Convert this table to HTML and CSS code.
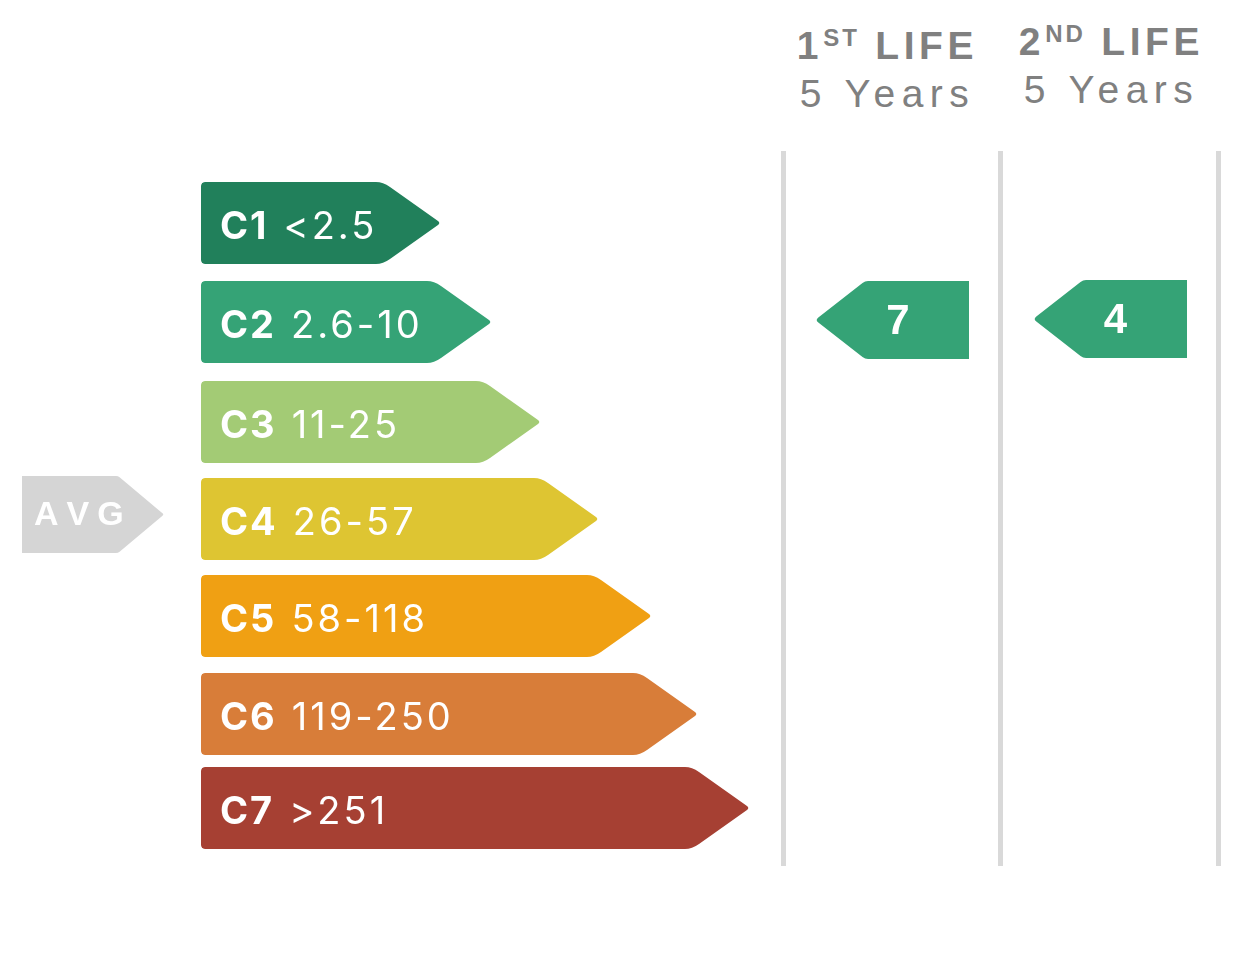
FILE: index.html
```html
<!DOCTYPE html>
<html lang="en">
<head>
<meta charset="utf-8">
<title>Category scale</title>
<link rel="stylesheet" href="styles.css">
</head>
<body>
<div class="chart">
  <div class="head head-1">
    <div class="head-title">1<sup class="ord">ST</sup> LIFE</div>
    <div class="head-sub">5 Years</div>
  </div>
  <div class="head head-2">
    <div class="head-title">2<sup class="ord">ND</sup> LIFE</div>
    <div class="head-sub">5 Years</div>
  </div>

  <div class="lane lane-1"></div>
  <div class="lane lane-2"></div>

  <div class="avg">AVG</div>

  <div class="bar c1"><b class="code">C1</b><span class="range">&lt;2.5</span></div>
  <div class="bar c2"><b class="code">C2</b><span class="range">2.6-10</span></div>
  <div class="bar c3"><b class="code">C3</b><span class="range">11-25</span></div>
  <div class="bar c4"><b class="code">C4</b><span class="range">26-57</span></div>
  <div class="bar c5"><b class="code">C5</b><span class="range">58-118</span></div>
  <div class="bar c6"><b class="code">C6</b><span class="range">119-250</span></div>
  <div class="bar c7"><b class="code">C7</b><span class="range">&gt;251</span></div>

  <div class="marker marker-1">7</div>
  <div class="marker marker-2">4</div>
</div>
</body>
</html>
```

FILE: styles.css
```css
html, body {
  margin: 0;
  padding: 0;
  background: #ffffff;
}

body {
  font-family: Inter, "Liberation Sans", Arial, sans-serif;
  color: #ffffff;
}

.chart {
  display: grid;
  grid-template-columns: 201px 580px 217px 223px;
  /* header, C1..C7 tracks (bar sits at the bottom of each), footer */
  grid-template-rows: 151px 113px 99px 100px 97px 97px 98px 94px 17px;
  width: 1221px;
}

/* ---------- column headers ---------- */
.head {
  grid-row: 1;
  align-self: start;
  padding-top: 22px;
  text-align: center;
  color: #808080;
  font-family: "Liberation Sans", Arial, sans-serif;
  font-size: 39px;
  line-height: 48px;
  white-space: nowrap;
}
.head-1 { grid-column: 3; padding-right: 4px; }
.head-2 { grid-column: 4; padding-top: 18px; padding-left: 4px; }

.head-title {
  font-weight: 700;
  letter-spacing: 4.6px;
}
.ord {
  font-size: 24px;
  line-height: 0;
  vertical-align: 13px;
  letter-spacing: 3px;
}
.head-sub {
  font-weight: 400;
  letter-spacing: 6.5px;
}

/* ---------- life lanes ---------- */
.lane {
  grid-row: 2 / 10;
  border-left: 5px solid #d9d9d9;
}
.lane-1 { grid-column: 3; }
.lane-2 { grid-column: 4; border-right: 5px solid #d9d9d9; }

/* ---------- bars ---------- */
.bar {
  grid-column: 2;
  align-self: end;
  justify-self: start;
  display: flex;
  align-items: center;
  gap: 15px;
  box-sizing: border-box;
  height: 82px;
  padding-left: 19px;
  padding-top: 4px;
  border-radius: 4px 0 0 4px;
  background: var(--c);
  font-size: 38px;
  line-height: 1;
  white-space: nowrap;
  -webkit-mask:
    linear-gradient(#000 0 0) left / calc(100% - 66px) 100% no-repeat,
    url("data:image/svg+xml;utf8,%3Csvg xmlns='http://www.w3.org/2000/svg' viewBox='0 0 68 82' width='68' height='82'%3E%3Cpath d='M0,0 H3 Q10,0 17,5 L65,39 Q67.6,41 65,43 L17,77 Q10,82 3,82 H0 Z'/%3E%3C/svg%3E") right / 68px 82px no-repeat;
  mask:
    linear-gradient(#000 0 0) left / calc(100% - 66px) 100% no-repeat,
    url("data:image/svg+xml;utf8,%3Csvg xmlns='http://www.w3.org/2000/svg' viewBox='0 0 68 82' width='68' height='82'%3E%3Cpath d='M0,0 H3 Q10,0 17,5 L65,39 Q67.6,41 65,43 L17,77 Q10,82 3,82 H0 Z'/%3E%3C/svg%3E") right / 68px 82px no-repeat;
}
.code {
  font-weight: 700;
  letter-spacing: 2px;
}
.range {
  font-weight: 400;
  letter-spacing: 3px;
}

.c1 { grid-row: 2; width: 240px; --c: #21805b; }
.c2 { grid-row: 3; width: 291px; --c: #35a376; }
.c3 { grid-row: 4; width: 340px; --c: #a3cb75; }
.c4 { grid-row: 5; width: 398px; --c: #dec532; }
.c5 { grid-row: 6; width: 451px; --c: #f0a013; }
.c6 { grid-row: 7; width: 497px; --c: #d87d39; }
.c7 { grid-row: 8; width: 549px; --c: #a64033; }

/* ---------- average tag ---------- */
.avg {
  grid-column: 1;
  grid-row: 5;
  align-self: end;
  justify-self: start;
  box-sizing: border-box;
  width: 142px;
  height: 77px;
  margin-bottom: 7px;
  margin-left: 22px;
  padding-left: 12px;
  padding-bottom: 4px;
  display: flex;
  align-items: center;
  background: #d5d5d5;
  font-family: "Liberation Sans", Arial, sans-serif;
  font-size: 34px;
  font-weight: 700;
  font-kerning: none;
  letter-spacing: 8px;
  line-height: 1;
  -webkit-mask:
    linear-gradient(#000 0 0) left / calc(100% - 55px) 100% no-repeat,
    url("data:image/svg+xml;utf8,%3Csvg xmlns='http://www.w3.org/2000/svg' viewBox='0 0 56 77' width='56' height='77'%3E%3Cpath d='M0,0 H8 Q10,0 11.6,1.3 L54.5,37.3 Q56,38.5 54.5,39.7 L11.6,75.7 Q10,77 8,77 H0 Z'/%3E%3C/svg%3E") right / 56px 77px no-repeat;
  mask:
    linear-gradient(#000 0 0) left / calc(100% - 55px) 100% no-repeat,
    url("data:image/svg+xml;utf8,%3Csvg xmlns='http://www.w3.org/2000/svg' viewBox='0 0 56 77' width='56' height='77'%3E%3Cpath d='M0,0 H8 Q10,0 11.6,1.3 L54.5,37.3 Q56,38.5 54.5,39.7 L11.6,75.7 Q10,77 8,77 H0 Z'/%3E%3C/svg%3E") right / 56px 77px no-repeat;
}

/* ---------- life markers ---------- */
.marker {
  grid-row: 3;
  align-self: end;
  justify-self: center;
  box-sizing: border-box;
  width: 154px;
  height: 78px;
  padding-left: 12px;
  display: flex;
  align-items: center;
  justify-content: center;
  background: #35a376;
  font-family: "Liberation Sans", Arial, sans-serif;
  font-size: 42px;
  font-weight: 700;
  line-height: 1;
  -webkit-mask:
    url("data:image/svg+xml;utf8,%3Csvg xmlns='http://www.w3.org/2000/svg' viewBox='0 0 60 78' width='60' height='78'%3E%3Cpath d='M60,0 H53 Q50,0 47.5,2 L3,36.7 Q0.4,39 3,41.3 L47.5,76 Q50,78 53,78 H60 Z'/%3E%3C/svg%3E") left / 60px 78px no-repeat,
    linear-gradient(#000 0 0) right / calc(100% - 58px) 100% no-repeat;
  mask:
    url("data:image/svg+xml;utf8,%3Csvg xmlns='http://www.w3.org/2000/svg' viewBox='0 0 60 78' width='60' height='78'%3E%3Cpath d='M60,0 H53 Q50,0 47.5,2 L3,36.7 Q0.4,39 3,41.3 L47.5,76 Q50,78 53,78 H60 Z'/%3E%3C/svg%3E") left / 60px 78px no-repeat,
    linear-gradient(#000 0 0) right / calc(100% - 58px) 100% no-repeat;
}
.marker-1 { grid-column: 3; margin-left: 5px; margin-bottom: 4px; }
.marker-2 { grid-column: 4; margin-bottom: 5px; }
```
